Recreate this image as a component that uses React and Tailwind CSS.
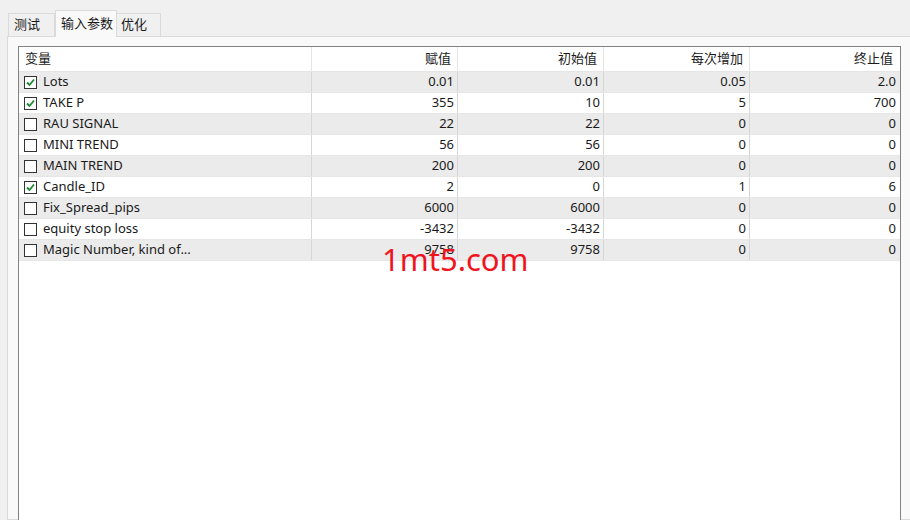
import React from "react";

const rows = [
  { name: "Lots", checked: true, value: "0.01", start: "0.01", step: "0.05", stop: "2.0" },
  { name: "TAKE P", checked: true, value: "355", start: "10", step: "5", stop: "700" },
  { name: "RAU SIGNAL", checked: false, value: "22", start: "22", step: "0", stop: "0" },
  { name: "MINI TREND", checked: false, value: "56", start: "56", step: "0", stop: "0" },
  { name: "MAIN TREND", checked: false, value: "200", start: "200", step: "0", stop: "0" },
  { name: "Candle_ID", checked: true, value: "2", start: "0", step: "1", stop: "6" },
  { name: "Fix_Spread_pips", checked: false, value: "6000", start: "6000", step: "0", stop: "0" },
  { name: "equity stop loss", checked: false, value: "-3432", start: "-3432", step: "0", stop: "0" },
  { name: "Magic Number, kind of...", checked: false, value: "9758", start: "9758", step: "0", stop: "0" },
];

const font = { fontFamily: '"Noto Sans", "Noto Sans CJK SC", sans-serif' };

function CheckBox({ checked }) {
  return (
    <span className="inline-flex h-[13px] w-[13px] shrink-0 items-center justify-center border border-[#333] bg-white">
      {checked && (
        <svg width="9" height="9" viewBox="0 0 9 9">
          <path d="M1 4.5 L3.5 7 L8 1.5" fill="none" stroke="#1c8a2e" strokeWidth="1.8" />
        </svg>
      )}
    </span>
  );
}

export default function App() {
  return (
    <div className="h-[520px] w-[910px] overflow-hidden bg-[#f0f0f0] text-[13px] text-[#1a1a1a]" style={font}>
      {/* tabs */}
      <div className="flex h-[36px] items-end pl-[8px]">
        <div className="flex h-[23px] w-[47px] items-center border border-b-0 border-[#dadada] bg-[#f0f0f0] pl-[5px]">测试</div>
        <div className="relative z-10 -mb-px flex h-[27px] w-[62px] items-center border border-b-0 border-[#dadada] bg-[#f9f9f9] pl-[5px]">输入参数</div>
        <div className="flex h-[23px] w-[44px] items-center border border-b-0 border-l-0 border-[#dadada] bg-[#f0f0f0] pl-[4px]">优化</div>
      </div>
      {/* panel */}
      <div className="ml-[7px] h-[484px] border border-r-0 border-[#dadada] bg-[#f9f9f9] pl-[10px] pr-[9px] pt-[9px]">
        <div className="relative h-[480px] border border-[#828282] bg-white">
          <div className="grid h-[25px] grid-cols-[292px_146px_146px_146px_150px] border-b border-[#e5e5e5]">
            <div className="flex items-center pl-[6px]">变量</div>
            <div className="flex items-center justify-end border-l border-[#e5e5e5] pr-[6px]">赋值</div>
            <div className="flex items-center justify-end border-l border-[#e5e5e5] pr-[6px]">初始值</div>
            <div className="flex items-center justify-end border-l border-[#e5e5e5] pr-[6px]">每次增加</div>
            <div className="flex items-center justify-end border-l border-[#e5e5e5] pr-[6px]">终止值</div>
          </div>
          {rows.map((r, i) => (
            <div
              key={r.name}
              className={`grid h-[21px] grid-cols-[292px_146px_146px_146px_150px] border-b border-[#e6e6e6] ${i % 2 === 0 ? "bg-[#ebebeb]" : "bg-white"}`}
            >
              <div className="flex items-center gap-[6px] pl-[5px]">
                <CheckBox checked={r.checked} />
                <span>{r.name}</span>
              </div>
              <div className="flex items-center justify-end border-l border-[#d6d6d6] pr-[3px]">{r.value}</div>
              <div className="flex items-center justify-end border-l border-[#d6d6d6] pr-[3px]">{r.start}</div>
              <div className="flex items-center justify-end border-l border-[#d6d6d6] pr-[3px]">{r.step}</div>
              <div className="flex items-center justify-end border-l border-[#d6d6d6] pr-[3px]">{r.stop}</div>
            </div>
          ))}
          <div className="pointer-events-none absolute left-[363px] top-[197px] text-[31px] leading-none text-[#f0141e]" style={font}>
            1mt5.com
          </div>
        </div>
      </div>
    </div>
  );
}
